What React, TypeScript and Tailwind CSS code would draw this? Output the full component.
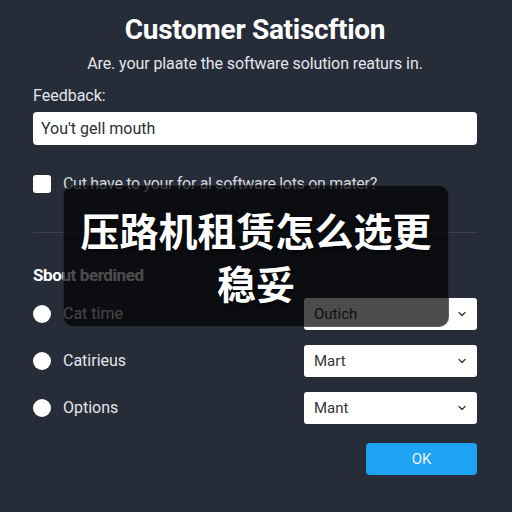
import React from 'react'
import { ChevronDown } from 'lucide-react'

const rows = [
  { label: 'Cat time', value: 'Outich' },
  { label: 'Catirieus', value: 'Mart' },
  { label: 'Options', value: 'Mant' },
]

export default function App() {
  return (
    <div className="relative w-[512px] h-[512px] overflow-hidden bg-[#272c39] font-['Roboto','Liberation_Sans',sans-serif] text-[#e6e8ec]">
      <div className="flex flex-col pl-[33px] pr-[35px] pt-[14px]">
        <h1 className="text-center text-[28px] leading-[32px] font-bold text-white tracking-[-0.3px]">
          Customer Satiscftion
        </h1>
        <p className="mt-[8px] text-center text-[16px] leading-[20px] text-[#e3e5ea] tracking-[-0.1px]">
          Are. your plaate the software solution reaturs in.
        </p>

        <label className="mt-[12px] text-[16px] leading-[20px] text-[#e3e5ea]">Feedback:</label>
        <div className="mt-[6px] h-[33px] rounded-[4px] bg-white flex items-center px-[8px] text-[16px] text-[#2c2f36]">
          You't gell mouth
        </div>

        <div className="mt-[29px] flex items-center gap-[12px] h-[20px]">
          <div className="w-[18px] h-[18px] rounded-[3px] bg-white" />
          <span className="text-[16px] text-[#d5d8de] tracking-[-0.3px]">
            Cut have to your for al software lots on mater?
          </span>
        </div>

        <div className="mt-[38px] border-t border-white/10" />

        <h2 className="mt-[32px] text-[17px] leading-[20px] font-bold text-white tracking-[-0.4px]">
          Sbout berdined
        </h2>

        <div className="mt-[13px] flex flex-col gap-[15px]">
          {rows.map((r) => (
            <div key={r.label} className="flex items-center justify-between h-[32px]">
              <div className="flex items-center gap-[12px]">
                <div className="w-[18px] h-[18px] rounded-full bg-white" />
                <span className="text-[16px] text-[#e3e5ea]">{r.label}</span>
              </div>
              <div className="w-[173px] h-[32px] rounded-[3px] bg-white flex items-center justify-between pl-[10px] pr-[9px] text-[15px] text-[#33363c]">
                <span>{r.value}</span>
                <ChevronDown size={12} strokeWidth={2.5} className="text-[#33363c]" />
              </div>
            </div>
          ))}
        </div>

        <div className="mt-[19px] flex justify-end">
          <button className="w-[111px] h-[32px] rounded-[4px] bg-[#1ea2f2] text-[15px] text-[#e6f4ff]">
            OK
          </button>
        </div>
      </div>

      <div className="absolute left-[63px] top-[185px] w-[386px] h-[142px] rounded-[10px] bg-black/70 border border-white/10 flex flex-col items-center justify-center">
        <p className="text-center text-[39px] leading-[53px] font-bold text-white font-['Noto_Sans_CJK_SC',sans-serif] [text-shadow:0_2px_4px_rgba(0,0,0,0.6)]">
          压路机租赁怎么选更
          <br />
          稳妥
        </p>
      </div>
    </div>
  )
}
